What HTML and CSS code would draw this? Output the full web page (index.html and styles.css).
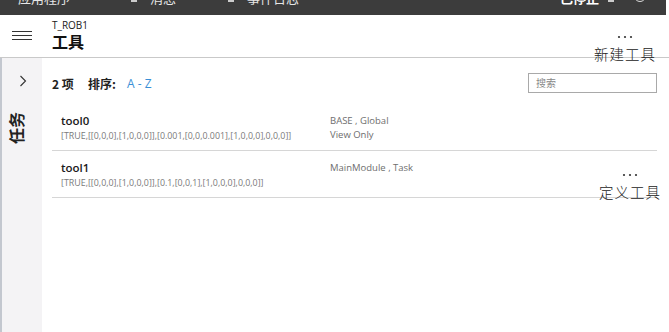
FILE: index.html
```html
<!DOCTYPE html>
<html lang="zh">
<head>
<meta charset="utf-8">
<link rel="stylesheet" href="styles.css">
</head>
<body>
<div class="page">
  <div class="topbar">
    <span class="tb-item tb-app">应用程序</span>
    <span class="tb-icon tb-icon1"></span>
    <span class="tb-item tb-msg">消息</span>
    <span class="tb-icon tb-icon2"></span>
    <span class="tb-item tb-log">事件日志</span>
    <span class="tb-item tb-stop">已停止</span>
    <span class="tb-mini"></span>
    <span class="tb-circle"></span>
  </div>
  <div class="header">
    <div class="hamburger"><span></span><span></span><span></span></div>
    <div class="titles">
      <div class="task-name">T_ROB1</div>
      <div class="page-title">工具</div>
    </div>
  </div>
  <div class="body">
    <aside class="sidebar">
      <svg class="chevron" width="8" height="12" viewBox="0 0 8 12"><path d="M1.5 1 L6.5 6 L1.5 11" fill="none" stroke="#333" stroke-width="1.1"/></svg>
      <div class="side-label">任务</div>
    </aside>
    <main class="main">
      <div class="toolbar">
        <div class="count">2 项</div>
        <div class="sort-label">排序:</div>
        <div class="sort-value">A - Z</div>
        <div class="search">搜索</div>
      </div>
      <div class="list">
        <div class="row">
          <div class="col-main">
            <div class="name">tool0</div>
            <div class="value">[TRUE,[[0,0,0],[1,0,0,0]],[0.001,[0,0,0.001],[1,0,0,0],0,0,0]]</div>
          </div>
          <div class="col-meta">
            <div class="meta">BASE , Global</div>
            <div class="meta">View Only</div>
          </div>
        </div>
        <div class="row">
          <div class="col-main">
            <div class="name">tool1</div>
            <div class="value">[TRUE,[[0,0,0],[1,0,0,0]],[0.1,[0,0,1],[1,0,0,0],0,0,0]]</div>
          </div>
          <div class="col-meta">
            <div class="meta">MainModule , Task</div>
          </div>
        </div>
      </div>
    </main>
  </div>
  <div class="annot annot-new">
    <svg class="dots" width="16" height="4" viewBox="0 0 16 4"><circle cx="2" cy="2" r="1.1"/><circle cx="8" cy="2" r="1.1"/><circle cx="14" cy="2" r="1.1"/></svg>
    <span class="annot-text">新建工具</span>
  </div>
  <div class="annot annot-def">
    <svg class="dots" width="16" height="4" viewBox="0 0 16 4"><circle cx="2" cy="2" r="1.1"/><circle cx="8" cy="2" r="1.1"/><circle cx="14" cy="2" r="1.1"/></svg>
    <span class="annot-text">定义工具</span>
  </div>
</div>
</body>
</html>
```

FILE: styles.css
```css
* { box-sizing: border-box; }
html, body { margin: 0; padding: 0; background: #fff; }
body {
  width: 669px;
  height: 332px;
  overflow: hidden;
  font-family: "Open Sans", "Noto Sans CJK SC", sans-serif;
  color: #222;
}
.page { position: relative; width: 669px; height: 332px; }

.topbar {
  position: relative;
  width: 666px;
  height: 15px;
  background: #3c3c3c;
  overflow: hidden;
}
.tb-item {
  position: absolute;
  top: -11px;
  font-family: "Noto Sans CJK SC", sans-serif;
  font-size: 13px;
  line-height: 18px;
  color: #e6e6e6;
}
.tb-app { left: 18px; }
.tb-msg { left: 150px; }
.tb-log { left: 247px; }
.tb-stop { left: 560px; font-weight: 700; color: #fff; }
.tb-icon { position: absolute; top: 0; width: 6px; height: 2px; background: #ccc; }
.tb-icon1 { left: 131px; }
.tb-icon2 { left: 228px; }
.tb-mini { position: absolute; left: 608px; top: 0; width: 6px; height: 2px; background: #ccc; }
.tb-circle {
  position: absolute; left: 634px; top: -10px;
  width: 12px; height: 12px; border-radius: 50%;
  border: 1.3px solid #ddd;
}

.header {
  display: flex;
  align-items: center;
  height: 43px;
  border-bottom: 1px solid #c9c9c9;
}
.hamburger {
  width: 52px;
  padding-left: 12px;
  display: flex;
  flex-direction: column;
  gap: 2.6px;
  margin-top: -1px;
}
.hamburger span { display: block; width: 20px; height: 1.4px; background: #333; }
.titles { display: flex; flex-direction: column; margin-top: -2px; }
.task-name {
  font-size: 10px;
  line-height: 12px;
  color: #222;
}
.page-title {
  font-family: "Noto Sans CJK SC", sans-serif;
  font-size: 16px;
  font-weight: 700;
  line-height: 20px;
  color: #111;
}

.body {
  display: flex;
  height: 274px;
  border-left: 2px solid #c3c7cf;
}
.sidebar {
  width: 40px;
  background: #f4f3f5;
  display: flex;
  flex-direction: column;
  align-items: center;
  padding-top: 17px;
}
.chevron { margin-left: 2px; }
.side-label {
  margin-top: 25px;
  margin-left: -12px;
  writing-mode: vertical-rl;
  text-orientation: sideways;
  transform: rotate(180deg);
  font-family: "Noto Sans CJK SC", sans-serif;
  font-size: 16px;
  font-weight: 700;
  line-height: 18px;
  color: #222;
}

.main {
  flex: 1;
  padding: 15px 12px 0 10px;
}
.toolbar {
  display: flex;
  align-items: center;
  height: 20px;
  font-family: "Noto Sans CJK SC", sans-serif;
  font-size: 12px;
  font-weight: 700;
}
.count { width: 36px; }
.sort-label { width: 39px; }
.sort-value { color: #3a8fd6; font-weight: 400; font-family: "Open Sans", sans-serif; font-size: 12px; }
.search {
  margin-left: auto;
  width: 129px;
  height: 20px;
  border: 1px solid #a9a9a9;
  padding-left: 7px;
  font-size: 10px;
  font-weight: 400;
  line-height: 18px;
  color: #888;
}

.list { margin-top: 11px; }
.row {
  display: flex;
  padding: 9px 0 7px 9px;
  border-bottom: 1px solid #d6d6d6;
}
.col-main { width: 269px; }
.name {
  font-size: 11.5px;
  font-weight: 600;
  line-height: 16px;
  color: #1a1a1a;
}
.value {
  font-size: 8.9px;
  line-height: 14px;
  color: #7a7a7a;
  white-space: nowrap;
}
.col-meta { padding-top: 1px; }
.meta {
  font-size: 9.5px;
  line-height: 14px;
  color: #6e6e6e;
}

.annot {
  position: absolute;
  display: flex;
  flex-direction: column;
  align-items: center;
}
.annot-new { left: 594px; top: 35px; }
.annot-def { left: 599px; top: 173px; }
.dots { fill: #333; }
.annot-text {
  margin-top: 6px;
  font-family: "Noto Sans CJK SC", sans-serif;
  font-weight: 300;
  font-size: 14.5px;
  letter-spacing: 1px;
  line-height: 18px;
  color: #222;
}
```
